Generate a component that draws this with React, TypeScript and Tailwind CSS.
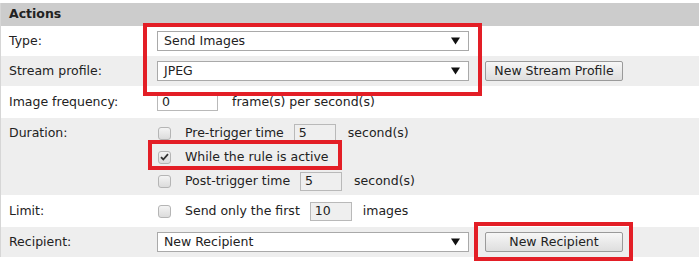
import type { ReactNode } from 'react';

const Row = ({ label, bg, h, top, children }: { label: string; bg: string; h: string; top?: boolean; children: ReactNode }) => (
  <div className={`flex ${bg} ${h} ${top ? 'items-start pt-[6px]' : 'items-center'}`}>
    <div className="w-[156px] shrink-0 pl-2">{label}</div>
    <div className="flex-1">{children}</div>
  </div>
);

const Select = ({ value }: { value: string }) => (
  <div className="flex h-[20px] w-[312px] items-center justify-between border border-[#a9a9a9] bg-white pl-[6px] pr-[8px]">
    <span>{value}</span>
    <svg width="9" height="8" viewBox="0 0 9 8">
      <path d="M0 0.5 H9 L4.5 7.5 Z" fill="#111" />
    </svg>
  </div>
);

const Button = ({ children }: { children: ReactNode }) => (
  <button className="h-[20px] w-[138px] rounded-[2px] border border-[#9a9a9a] bg-gradient-to-b from-[#f7f7f7] to-[#dedede] text-[12.5px] leading-none text-[#222]">
    {children}
  </button>
);

const Check = ({ checked }: { checked?: boolean }) => (
  <div className="flex h-[13px] w-[13px] shrink-0 items-center justify-center rounded-[3px] border border-[#b5b5b5] bg-gradient-to-b from-[#f4f4f4] to-[#dcdcdc]">
    {checked && (
      <svg width="9" height="8" viewBox="0 0 9 8">
        <path d="M1 4.2 L3.3 6.5 L8 1.2" stroke="#333" strokeWidth="1.8" fill="none" />
      </svg>
    )}
  </div>
);

const Small = ({ value, w = 'w-[42px]' }: { value: string; w?: string }) => (
  <div className={`flex h-[19px] ${w} items-center border border-[#b9b9b9] bg-[#efefef] pl-[4px]`}>{value}</div>
);

export default function App() {
  return (
    <div className="relative h-[264px] w-[699px] overflow-hidden bg-white pt-[3px] font-['DejaVu_Sans',sans-serif] text-[12.5px] text-[#222]">
      <div className="border-l border-[#d6d6d6]">
        <div className="flex h-[23px] items-center bg-[#cccccc] pl-2 font-bold">Actions</div>

        <Row label="Type:" bg="bg-white" h="h-[30px]">
          <Select value="Send Images" />
        </Row>

        <Row label="Stream profile:" bg="bg-[#eeeeee]" h="h-[30px]">
          <div className="flex items-center gap-4">
            <Select value="JPEG" />
            <Button>New Stream Profile</Button>
          </div>
        </Row>

        <Row label="Image frequency:" bg="bg-white" h="h-[32px]">
          <div className="flex items-center gap-[14px]">
            <div className="flex h-[17px] w-[61px] items-center border border-[#b9b9b9] bg-white pl-[4px]">0</div>
            <span>frame(s) per second(s)</span>
          </div>
        </Row>

        <Row label="Duration:" bg="bg-[#eeeeee]" h="h-[77px]" top>
          <div className="-mt-[3px] flex flex-col pl-px">
            <div className="flex h-[24px] items-center">
              <Check />
              <span className="ml-[14px] mr-[10px]">Pre-trigger time</span>
              <Small value="5" />
              <span className="ml-[12px]">second(s)</span>
            </div>
            <div className="flex h-[24px] items-center">
              <Check checked />
              <span className="ml-[14px]">While the rule is active</span>
            </div>
            <div className="flex h-[24px] items-center">
              <Check />
              <span className="ml-[14px] mr-[10px]">Post-trigger time</span>
              <Small value="5" />
              <span className="ml-[12px]">second(s)</span>
            </div>
          </div>
        </Row>

        <Row label="Limit:" bg="bg-white" h="h-[32px]">
          <div className="flex items-center pl-px">
            <Check />
            <span className="ml-[14px] mr-[10px]">Send only the first</span>
            <Small value="10" />
            <span className="ml-[11px]">images</span>
          </div>
        </Row>

        <Row label="Recipient:" bg="bg-[#eeeeee]" h="h-[30px]">
          <div className="flex items-center gap-4">
            <Select value="New Recipient" />
            <Button>New Recipient</Button>
          </div>
        </Row>
      </div>

      <div className="absolute left-[143px] top-[23px] h-[73px] w-[339px] border-4 border-[#e31e26]" />
      <div className="absolute left-[148px] top-[140px] h-[30px] w-[194px] border-4 border-[#e31e26]" />
      <div className="absolute left-[474px] top-[222px] h-[39px] w-[159px] border-4 border-[#e31e26]" />
    </div>
  );
}
